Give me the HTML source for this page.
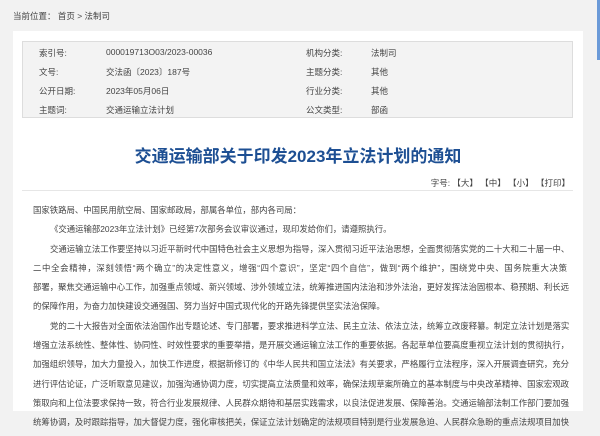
<!DOCTYPE html>
<html><head><meta charset="utf-8"><style>
*{margin:0;padding:0;box-sizing:border-box}
body{width:600px;height:401px;overflow:hidden;background:#f2f2f2;font-family:"Liberation Sans","Noto Sans CJK SC",sans-serif;color:#333;position:relative}
.bc{position:absolute;left:13px;top:10px;font-size:8.5px;color:#444}
.card{position:absolute;left:13px;top:31px;width:570px;height:380px;background:#fff}
.info{position:absolute;left:9px;top:10px;width:551px;height:77px;background:#f3f3f3;border:1px solid #ddd}
.info div{position:absolute;font-size:8.5px;color:#444;white-space:nowrap}
.title{position:absolute;left:0;width:570px;top:111px;text-align:center;font-size:17px;font-weight:bold;color:#1d4f93}
.fs{position:absolute;right:13px;top:146px;font-size:8.5px;color:#444}
.sep{position:absolute;left:9px;width:551px;top:159px;border-top:1px solid #e6e6e6}
.body{position:absolute;left:20px;top:173px;width:534px;font-size:8.4px;color:#444}
.l{height:19.3px;line-height:12px;white-space:nowrap;text-align:justify;text-align-last:justify}
.e{text-align-last:left}
.i{padding-left:17px}
.blue{position:absolute;right:0;top:0;width:3px;height:60px;background:#6b9ad8}
</style></head><body>
<div class="blue"></div>
<div class="bc">当前位置： 首页 &gt; 法制司</div>
<div class="card">
<div class="info">
<div style="left:16px;top:5px">索引号:</div><div style="left:83px;top:5px">000019713O03/2023-00036</div><div style="left:283px;top:5px">机构分类:</div><div style="left:348px;top:5px">法制司</div>
<div style="left:16px;top:24px">文号:</div><div style="left:83px;top:24px">交法函〔2023〕187号</div><div style="left:283px;top:24px">主题分类:</div><div style="left:348px;top:24px">其他</div>
<div style="left:16px;top:43px">公开日期:</div><div style="left:83px;top:43px">2023年05月06日</div><div style="left:283px;top:43px">行业分类:</div><div style="left:348px;top:43px">其他</div>
<div style="left:16px;top:62px">主题词:</div><div style="left:83px;top:62px">交通运输立法计划</div><div style="left:283px;top:62px">公文类型:</div><div style="left:348px;top:62px">部函</div>
</div>
<div class="title">交通运输部关于印发2023年立法计划的通知</div>
<div class="fs">字号: 【大】 【中】 【小】 【打印】</div>
<div class="sep"></div>
<div class="body">
<div class="l e">国家铁路局、中国民用航空局、国家邮政局，部属各单位，部内各司局：</div>
<div class="l e i">《交通运输部2023年立法计划》已经第7次部务会议审议通过，现印发给你们，请遵照执行。</div>
<div class="l i">交通运输立法工作要坚持以习近平新时代中国特色社会主义思想为指导，深入贯彻习近平法治思想，全面贯彻落实党的二十大和二十届一中、</div>
<div class="l">二中全会精神，深刻领悟“两个确立”的决定性意义，增强“四个意识”，坚定“四个自信”，做到“两个维护”，围绕党中央、国务院重大决策</div>
<div class="l">部署，聚焦交通运输中心工作，加强重点领域、新兴领域、涉外领域立法，统筹推进国内法治和涉外法治，更好发挥法治固根本、稳预期、利长远</div>
<div class="l e">的保障作用，为奋力加快建设交通强国、努力当好中国式现代化的开路先锋提供坚实法治保障。</div>
<div class="l i">党的二十大报告对全面依法治国作出专题论述、专门部署，要求推进科学立法、民主立法、依法立法，统筹立改废释纂。制定立法计划是落实</div>
<div class="l">增强立法系统性、整体性、协同性、时效性要求的重要举措，是开展交通运输立法工作的重要依据。各起草单位要高度重视立法计划的贯彻执行，</div>
<div class="l">加强组织领导，加大力量投入，加快工作进度，根据新修订的《中华人民共和国立法法》有关要求，严格履行立法程序，深入开展调查研究，充分</div>
<div class="l">进行评估论证，广泛听取意见建议，加强沟通协调力度，切实提高立法质量和效率，确保法规草案所确立的基本制度与中央改革精神、国家宏观政</div>
<div class="l">策取向和上位法要求保持一致，符合行业发展规律、人民群众期待和基层实践需求，以良法促进发展、保障善治。交通运输部法制工作部门要加强</div>
<div class="l">统筹协调，及时跟踪指导，加大督促力度，强化审核把关，保证立法计划确定的法规项目特别是行业发展急迫、人民群众急盼的重点法规项目加快</div>
</div>
</div>
</body></html>
